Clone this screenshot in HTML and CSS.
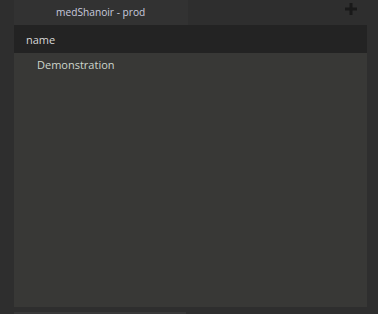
FILE: index.html
```html
<!DOCTYPE html>
<html lang="en">
<head>
    <meta charset="UTF-8">
    <title>medShanoir</title>
    <link rel="stylesheet" href="styles.css">
</head>
<body>
    <div class="tabbar">
        <div class="tab">medShanoir - prod</div>
        <div class="add">
            <svg width="12" height="12" viewBox="0 0 12 12"><path d="M6 0v12M0 6h12" stroke="#191919" stroke-width="3"/></svg>
        </div>
    </div>
    <div class="panel">
        <div class="header">name</div>
        <div class="row">Demonstration</div>
    </div>
    <div class="footer-tab"></div>
</body>
</html>
```
FILE: styles.css
```css
body {
    margin: 0;
    background-color: #2e2e2e;
    font-family: "Open Sans", "DejaVu Sans", sans-serif;
    font-size: 11px;
    width: 378px;
    height: 314px;
    overflow: hidden;
}
.tabbar {
    display: flex;
    height: 25px;
    padding-left: 14px;
}
.tab {
    width: 174px;
    background-color: #323232;
    color: #c9cade;
    font-size: 10.2px;
    padding-left: 42px;
    box-sizing: border-box;
    line-height: 24px;
}
.add {
    margin-left: auto;
    margin-right: 21px;
    padding-top: 3px;
}
.panel {
    margin: 0 11px 0 14px;
    height: 282px;
    background-color: #383836;
}
.header {
    height: 28px;
    line-height: 29px;
    background-color: #232323;
    color: #d8d8d8;
    padding-left: 12px;
}
.row {
    height: 23px;
    line-height: 23px;
    color: #cdd6cc;
    padding-left: 23px;
}
.footer-tab {
    margin: 5px 0 0 14px;
    width: 172px;
    height: 2px;
    background-color: #383838;
}
```
